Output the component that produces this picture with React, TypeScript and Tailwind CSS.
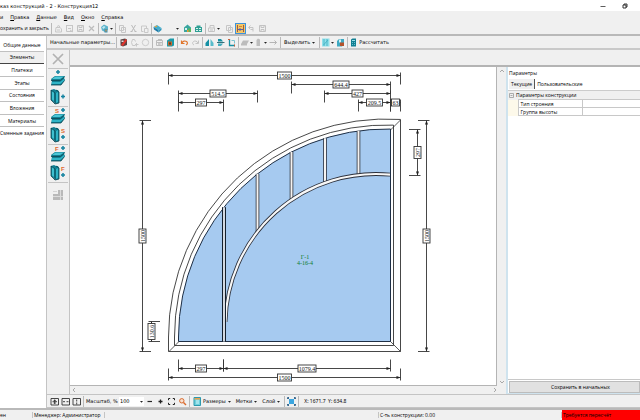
import React, { useState } from 'react';

interface IconProps {
  className?: string;
}

const INK = '#333333';
const TEAL = '#1590a4';

const baseSvg = 'block w-[9px] h-[9px] shrink-0';

/* ---------- icons ---------- */

type Shape =
  | 'doc' | 'save' | 'window' | 'cross' | 'copy' | 'cut' | 'paste' | 'print' | 'report' | 'layers'
  | 'house' | 'house2' | 'undo' | 'redo' | 'back' | 'dimension' | 'pencil' | 'globe' | 'orangeBox' | 'mirror'
  | 'align' | 'axes' | 'block' | 'column' | 'arrow' | 'grid' | 'corner' | 'calc' | 'fitAll' | 'fitW'
  | 'fitH' | 'minus' | 'plus' | 'full' | 'search' | 'ruler' | 'spread' | 'circle' | 'addDoc';

const shapes: Record<Shape, React.ReactNode> = {
  doc: <path d="M2 3.500h4l1.500 1.500v3H1.500zM3 2.500l2-1 1 2M3 6h3" fill="none" stroke="#c8c8c8" />,
  save: <path d="M1.500 1.500h6v6h-6zM3 1.500v2h3v-2M3 7.500v-2h3v2" fill="none" stroke="#c2c2c2" />,
  window: <path d="M1 1.500h7M1.500 1v6.500h6V1M3 4.500h3M5 6l3 2" fill="none" stroke="#c6c6c6" />,
  cross: <path d="M2 2l5 5M7 2L2 7" fill="none" stroke="#bcbcbc" strokeWidth="1.200" />,
  copy: <path d="M1.500 1.500h4v5h-4zM3.500 3.500h4v5h-4zM5 5.500h1.500" fill="none" stroke="#c6c6c6" />,
  cut: <path d="M2.500 1l3.500 6M6.500 1L3 7M1.500 7.500h2M5.500 7.500h2" fill="none" stroke="#bababa" />,
  paste: <path d="M1.500 2h5v3M1.500 2v5.500h2M4.500 4.500h3.500v4H4.500z" fill="none" stroke="#c8c8c8" />,
  print: <path d="M1.500 4h6v3.500h-6zM3 4V1.500h4V4M3 6h3" fill="none" stroke="#c4c4c4" />,
  report: (
    <>
      <path d="M1 3l3-2.500 4 2v3L5 8 2 6.500z" fill="#5db4cc" />
      <path d="M2 3.500L4 2l1.500 1-2 2z" fill="#c4e8f0" />
      <path d="M4.500 5h3v3.500h-3z" fill="#3b8fb0" />
      <path d="M5.500 5.500h1v2h-1z" fill="#f09a38" />
    </>
  ),
  layers: (
    <>
      <path d="M.5 3L4 1l4.500 3-3 2z" fill="#3fb0d0" />
      <path d="M.5 3l5 3v2.500L1 5.500z" fill="#1e7aa8" />
      <path d="M5.500 6l3-2v2l-3 2.500z" fill="#2c94ba" />
      <path d="M1.500 2.500L3.500 1.500l1 1-2 1z" fill="#e8a13a" />
    </>
  ),
  house: (
    <>
      <path d="M1 3.500L4.500.5 8 3.500V8H1z" fill="#3aa6a0" />
      <path d="M2 4h2v2H2z" fill="#d6f2ee" />
      <path d="M5 4.500h3V8H5z" fill="#58b85a" />
      <path d="M4 6h1.500v2H4z" fill="#e89b36" />
    </>
  ),
  house2: (
    <>
      <path d="M1 3h1.500V1.500h4V3H8v5H1z" fill="#2f9f94" />
      <path d="M2 4h2v1H2zM5 4h2v1H5zM2 6h2v1H2zM5 6h2v1H5z" fill="#d6f2ee" />
    </>
  ),
  undo: <path d="M1.500 2.500v3h3M2 5c1-2 3-2.500 4.500-1.500S7.500 6.500 6 7" fill="none" stroke="#e0752c" strokeWidth="1.200" />,
  redo: <path d="M7.500 2.500v3h-3M7 5c-1-2-3-2.500-4.500-1.500S1.500 6.500 3 7" fill="none" stroke="#c4c4c4" />,
  back: <path d="M3.500 1.500l-2 2 2 2M2 3.500h4v4M4 5.500h2" fill="none" stroke="#c4c4c4" />,
  dimension: (
    <>
      <path d="M0 0h9v9H0z" fill="#f6c666" />
      <path d="M1.500 1v7M7.500 1v7" stroke="#9a5b46" />
      <path d="M2 5.500h5M4 4v3" stroke="#5660a8" />
      <path d="M3 2.500h3" stroke="#d08a2c" />
    </>
  ),
  pencil: (
    <>
      <path d="M1.500 1.500L6 .5l2 1V7L4 8.500l-2.500-1z" fill="#5b4444" />
      <path d="M2 7l4.500-6L8 2.500 4 8z" fill="#e2342c" />
      <path d="M2.500 2.500h2v1.500h-2z" fill="#e9dede" />
    </>
  ),
  addDoc: <path d="M2.500 1.500l-1 3 1 3h3M2.500 1.500h2l1 2M6.500 5v3.500M5 6.500h3.500" fill="none" stroke="#c8c8c8" />,
  circle: <circle cx="4.500" cy="4.500" r="3.200" fill="none" stroke="#cdcdcd" />,
  globe: <path d="M1.500 2.500h6v5h-6zM1.500 4.500h6M3 1.500h4M4 4.500v3M3 6h3.500" fill="none" stroke="#bdbdbd" />,
  orangeBox: (
    <>
      <path d="M1 2.500L4 .5h4v7L6 8.500H1z" fill="#1b9aa9" />
      <path d="M2 3.500h4v4H2z" fill="#c9692b" />
      <path d="M3 4.500h2v2H3z" fill="#5c3a28" />
    </>
  ),
  mirror: (
    <>
      <path d="M4 1v7H.5V5z" fill={TEAL} />
      <path d="M5.500 1v7h3V5z" fill="#58bccb" />
    </>
  ),
  align: (
    <>
      <path d="M2 1h3l2 2.500H2z" fill={TEAL} />
      <path d="M1 4.500h7.500" stroke="#35707a" />
      <path d="M2 5.500h5l-2 2.500H2z" fill="#43adbf" />
    </>
  ),
  axes: (
    <>
      <path d="M2.500 1v6.500H8" fill="none" stroke={TEAL} strokeWidth="1.300" />
      <path d="M4.500 2.500h3v3" fill="none" stroke="#7cc4d0" />
      <path d="M1 1.500h2M7.500 6.500v2" fill="none" stroke="#c4603a" />
    </>
  ),
  block: <path d="M1 6l2-3.500h6L7 6zM1 6v1.500h6V6" fill="#bcbcbc" />,
  column: <path d="M2.500 2L4 .5l2 1V8H2.500z" fill="#bebebe" />,
  arrow: <path d="M.5 4.500h7M5.500 2.500l2 2-2 2" fill="none" stroke="#b5b5b5" />,
  grid: (
    <>
      <path d="M1 .5h7.500v8H1z" fill="#8fe0ea" />
      <path d="M3 1v7M6 1v7M2.500 7l4.500-5" stroke="#46b1c4" strokeWidth=".9" />
    </>
  ),
  corner: (
    <>
      <path d="M1 3l2-2h5v5L6 8.500H1z" fill="#3ea9c2" />
      <path d="M3 1.500h2v3H3z" fill="#d4f0f4" />
      <path d="M4 4.500h4v3.500H4z" fill="#b4532c" />
    </>
  ),
  calc: (
    <>
      <path d="M2 1.500L3.500.5H7v8H2z" fill="#127f92" />
      <path d="M3 2h3v1H3z" fill="#9be0e8" />
      <path d="M3 4h1v1H3zM5 4h1v1H5zM3 6h1v1H3zM5 6h1v1H5z" fill="#67c0cc" />
    </>
  ),
  fitAll: <path d="M1 1.500h7.500v6.500H1zM4.700 2.500v4.500M2.500 4.700h4.500M3.700 3.500h2M3.700 6h2" fill="none" stroke={INK} strokeWidth=".9" />,
  fitW: <path d="M1 1.500h7.500v6.500H1zM2 4.700h2M5.500 4.700h2" fill="none" stroke={INK} strokeWidth=".9" />,
  fitH: <path d="M1 1.500h7.500v6.500H1zM4.700 2.500v2M4.700 5.500v2" fill="none" stroke={INK} strokeWidth=".9" />,
  minus: <path d="M2.500 4.500h4.500" stroke="#222" strokeWidth="1.200" />,
  plus: <path d="M2.500 4.500h4M4.500 2.500v4" stroke="#222" strokeWidth="1.300" />,
  full: <path d="M1.500 3.200V1.500h1.700M5.800 1.500h1.700v1.700M7.500 5.800v1.700H5.800M3.200 7.500H1.500V5.800" fill="none" stroke="#222" />,
  search: (
    <>
      <circle cx="3.800" cy="3.800" r="2.200" fill="#f7e1d2" stroke="#d9692b" />
      <path d="M5.500 5.500l2.500 2.500" stroke="#d9692b" strokeWidth="1.400" />
    </>
  ),
  ruler: (
    <>
      <path d="M1 .5h6.500V8.500H1z" fill="#6fd0dc" stroke="#2c99ad" />
      <path d="M1.500 1h5.500v1.500H1.500z" fill="#eea04a" />
      <path d="M3 4h3M3 6h3" stroke="#d6f6fa" />
    </>
  ),
  spread: (
    <>
      <path d="M.5 2V.5H2M7 .5h1.500V2M8.500 7v1.500H7M2 8.500H.5V7M1 1l7 7M8 1L1 8" fill="none" stroke="#3a6a90" />
      <path d="M2 2h5v5H2z" fill="#3ba6e0" />
    </>
  ),
};

const Icon: React.FC<IconProps & { name: Shape }> = ({ name, className = baseSvg }) => (
  <svg viewBox="0 0 9 9" className={className} aria-hidden="true">
    {shapes[name]}
  </svg>
);

const Caret = () => (
  <svg viewBox="0 0 5 5" className="block w-[5px] h-[5px] shrink-0" aria-hidden="true">
    <path d="M1 2h3L2.500 3.700z" fill="#222" />
  </svg>
);

type ProfileKind = 'flat' | 'tall';

const ProfileIcon: React.FC<{ kind: ProfileKind; mark?: 'S' | 'F' }> = ({ kind, mark }) => (
  <svg viewBox="0 0 18 17" className="block w-[18px] h-[17px]" aria-hidden="true">
    {kind === 'flat' ? (
      <>
        <path d="M2 9l4-3h10l-1 2 1 2-4 5H2l1-3z" fill="#127f92" />
        <path d="M3 9l3.500-2.500H15L11 9z" fill="#4cc6d6" />
        <path d="M2.500 12L11 12l4-3v2l-4 3H3z" fill="#2fb4c6" />
        <path d="M2 10.500h9.500L15.500 7M2 15h10l3.500-4.500" fill="none" stroke="#0c4653" strokeWidth=".8" />
        <path d={mark ? 'M14 0v4M12 2h4' : 'M9 0v4M7 2h4'} stroke="#1583a0" strokeWidth="1.500" />
        {mark && <text x="6" y="4.500" fontSize="6" fontWeight="700" fill="#e0672c" fontFamily="Liberation Sans, sans-serif">{mark}</text>}
      </>
    ) : (
      <>
        <path d="M2 2l3-1 2 1h2l1 2v11l-3 1-5-4z" fill="#127f92" />
        <path d="M3 3l2 1v9l-2-1.500z" fill="#3fc0d0" />
        <path d="M7 5l2-1v10l-2 1z" fill="#2fb4c6" />
        <path d="M2 2l4 3v11M2 2v10l4 4 4-1V4L7 2" fill="none" stroke="#0c4653" strokeWidth=".8" />
        <path d={mark ? 'M14 9v4M12 11h4' : 'M14 6.500v4M12 8.500h4'} stroke="#1583a0" strokeWidth="1.500" />
        {mark && <text x="12" y="7" fontSize="6" fontWeight="700" fill="#e0672c" fontFamily="Liberation Sans, sans-serif">{mark}</text>}
      </>
    )}
  </svg>
);

/* ---------- toolbar parts ---------- */

const Sep = () => <span className="w-px h-[11px] mx-px bg-[#b9b9b9] shrink-0" />;

const IconButton: React.FC<{ name: Shape; label: string; active?: boolean }> = ({ name, label, active }) => (
  <button
    aria-label={label}
    className={active
      ? 'w-[11px] h-[11px] flex items-center justify-center shrink-0 border border-[#3c93dc] bg-[#f6c666]'
      : 'w-[11px] h-[11px] flex items-center justify-center shrink-0'}
  >
    <Icon name={name} />
  </button>
);

const SplitButton: React.FC<{ name: Shape; label: string }> = ({ name, label }) => (
  <button aria-label={label} className="h-[11px] flex items-center shrink-0">
    <Icon name={name} />
    <Caret />
  </button>
);

const TextMenuButton: React.FC<{ text: string; icon?: Shape }> = ({ text, icon }) => (
  <button className="h-[11px] flex items-center gap-px px-0.5 shrink-0">
    {icon && <Icon name={icon} />}
    <span>{text}</span>
    <Caret />
  </button>
);

/* ---------- drawing ---------- */

interface DimProps {
  from: number;
  to: number;
  at: number;
  label: string;
  size: number;
  arrows?: boolean;
  ticks?: 'down' | 'up';
}

const labelFont = '"Liberation Serif", serif';

const HDim: React.FC<DimProps> = ({ from, to, at, label, size, arrows = true, ticks = 'down' }) => {
  const mid = (from + to) / 2;
  const top = ticks === 'down' ? at - 3 : at - 9;
  return (
    <g>
      <path d={`M${from} ${at}H${to}M${from} ${top}v12M${to} ${top}v12`} stroke={INK} fill="none" strokeWidth=".9" />
      {arrows && <path d={`M${from} ${at}l4-1.500v3zM${to} ${at}l-4-1.500v3z`} fill="#222" />}
      <rect x={mid - size / 2} y={at - 3.5} width={size} height="7" fill="#fff" stroke={INK} strokeWidth=".9" />
      <text x={mid} y={at + 2.2} fontSize="6" textAnchor="middle" fontFamily={labelFont} fill="#111">{label}</text>
    </g>
  );
};

const VDim: React.FC<DimProps & { side: 'left' | 'right' }> = ({ from, to, at, label, size, side }) => {
  const mid = (from + to) / 2;
  const start = side === 'left' ? at - 3 : at - 8.5;
  return (
    <g>
      <path d={`M${at} ${from}V${to}M${start} ${from}h11.500M${start} ${to}h11.500`} stroke={INK} fill="none" strokeWidth=".9" />
      <path d={`M${at} ${from}l-1.500 4h3zM${at} ${to}l-1.500-4h3z`} fill="#222" />
      <rect x={at - 3.5} y={mid - size / 2} width="7" height={size} fill="#fff" stroke={INK} strokeWidth=".9" />
      <text transform={`translate(${at + 2.2} ${mid}) rotate(-90)`} fontSize="6" textAnchor="middle" fontFamily={labelFont} fill="#111">{label}</text>
    </g>
  );
};

// outer frame arcs share one centre, the inner impost arc has its own
const CX = 386.5;
const CY = 337;
const frameY = (r: number, x: number) => CY - Math.sqrt(r * r - (CX - x) * (CX - x));

const IR = 150.5;
const innerY = (x: number) => 324.5 - Math.sqrt(IR * IR - (376 - x) * (376 - x));

const framePath = (r: number, bottom: number, right: number) =>
  `M${CX - r} ${bottom}V${CY}A${r} ${r} 0 0 1 ${right} ${frameY(r, right)}V${bottom}Z`;

const innerArc = `M225.500 322A${IR} ${IR} 0 0 1 390.500 ${innerY(390.5)}`;

const mullions = [257.5, 291.5, 325, 358.5];

const Drawing = () => (
  <svg viewBox="70 67 426 319" className="block w-[426px] h-[319px] shrink-0" role="img" aria-label="Конструкция12">
    <path d={framePath(218, 351.5, 400.5)} fill="#fff" stroke={INK} strokeWidth=".9" />
    <path d={framePath(212, 345.5, 393.5)} fill="#fff" stroke={INK} strokeWidth=".9" />
    <path d={framePath(208, 341.5, 390.5)} fill="#a6caf0" stroke="#1f2f45" />
    <path d="M169 351.500l10-10M400.500 351.500l-10-10M400.500 120l-10 10" stroke={INK} strokeWidth=".8" />

    {mullions.map((x) => (
      <g key={x}>
        <path d={`M${x} ${frameY(208, x)}V${innerY(x)}`} stroke="#2b2f3a" strokeWidth="3.600" />
        <path d={`M${x} ${frameY(208, x)}V${innerY(x)}`} stroke="#f5f3f1" strokeWidth="2" />
      </g>
    ))}

    <path d={innerArc} fill="none" stroke="#2b2f3a" strokeWidth="3.800" />
    <path d={innerArc} fill="none" stroke="#f7f7f7" strokeWidth="2.200" />
    <path d={`M224 ${frameY(208, 224)}V341.500`} stroke="#14202e" strokeWidth="4" />
    <path d={`M224 ${frameY(208, 224)}V341.500`} stroke="#e8eef5" strokeWidth="1.800" />
    <path d="M390.500 129.500V341.500" stroke="#1f2f45" />

    <HDim from={168.5} to={400.5} at={75.5} label="1500" size={14} />
    <HDim from={291.5} to={390.5} at={84.5} label="644.4" size={16} />
    <HDim from={324.5} to={390.5} at={93.5} label="427" size={11} />
    <HDim from={178.5} to={257.5} at={93.5} label="514.5" size={16} />
    <HDim from={178.5} to={223.5} at={102.5} label="297" size={11} />
    <HDim from={358.5} to={390.5} at={102.5} label="209.5" size={16} />
    <HDim from={390.5} to={400.5} at={102.5} label="63" size={8} arrows={false} />

    <VDim from={120.5} to={351.5} at={142.5} label="1500" size={14} side="left" />
    <VDim from={321.5} to={341.5} at={151.5} label="130.6" size={16} side="left" />
    <VDim from={129.5} to={175.5} at={417.5} label="297" size={12} side="right" />
    <VDim from={120.5} to={351.5} at={426.5} label="1500" size={14} side="right" />

    <HDim from={178.5} to={223.5} at={368.5} label="297" size={11} ticks="up" />
    <HDim from={223.5} to={390.5} at={368.5} label="1079.4" size={18} ticks="up" />
    <HDim from={168.5} to={400.5} at={377.5} label="1500" size={14} ticks="up" />

    <g fontFamily={labelFont} fontSize="6" textAnchor="middle" fill="#0b7d2c">
      <text x="305" y="259">Г-1</text>
      <text x="305" y="265">4-16-4</text>
    </g>
  </svg>
);

/* ---------- page ---------- */

const menu = ['Правка', 'Данные', 'Вид', 'Окно', 'Справка'];
const sections = ['Общие данные', 'Элементы', 'Платежи', 'Этапы', 'Состояния', 'Вложения', 'Материалы', 'Сменные задания'];
const params = ['Тип строения', 'Группа высоты'];

const ToolColumn = () => (
  <div className="w-[23px] shrink-0 flex flex-col items-center border-r border-[#c4c4c4]">
    <button aria-label="Удалить" className="w-5 h-[19px] flex items-center justify-center border-b border-[#c4c4c4]">
      <svg viewBox="0 0 12 12" className="block w-3 h-3" aria-hidden="true">
        <path d="M1 1l10 10M11 1L1 11" stroke="#b2b2b2" strokeWidth="1.700" />
      </svg>
    </button>
    {([undefined, 'S', 'F'] as const).map((mark) => (
      <div key={mark ?? 'base'} className="w-5 h-[38px] flex flex-col items-center justify-evenly border-b border-[#c4c4c4]">
        <button aria-label={`Горизонтальный профиль ${mark ?? ''}`}>
          <ProfileIcon kind="flat" mark={mark} />
        </button>
        <button aria-label={`Вертикальный профиль ${mark ?? ''}`}>
          <ProfileIcon kind="tall" mark={mark} />
        </button>
      </div>
    ))}
    <button aria-label="Раскладка" className="w-5 h-6 flex items-center justify-center">
      <svg viewBox="0 0 12 12" className="block w-3 h-3" aria-hidden="true">
        <path d="M1 5h5V1h5v10H1z" fill="#b9b9b9" />
        <path d="M1 7.500h10M8.500 1v10" stroke="#dcdcdc" />
        <path d="M1 2.500h4" stroke="#d4d4d4" />
      </svg>
    </button>
  </div>
);

const ParamsPanel = () => {
  const [tab, setTab] = useState(0);
  return (
    <aside className="flex-1 min-w-0 flex flex-col bg-white border-l-2 border-b border-[#cfe3ee]">
      <h2 className="h-[11px] px-px flex items-center">Параметры</h2>
      <div className="h-3 px-px flex items-center" role="tablist">
        {['Текущие', 'Пользовательские'].map((name, i) => (
          <button
            key={name}
            role="tab"
            aria-selected={tab === i}
            onClick={() => setTab(i)}
            className={tab === i ? 'h-[10px] px-0.5 bg-[#f0f0f0] border-r border-[#555555]' : 'h-[10px] px-0.5'}
          >
            {name}
          </button>
        ))}
      </div>
      <table className="w-full table-fixed border-collapse">
        <colgroup>
          <col className="w-[10px]" />
          <col className="w-16" />
          <col />
        </colgroup>
        <tbody>
          <tr className="h-[9px] bg-[#f0f0f0]">
            <td colSpan={3} className="border-t border-[#cccccc] p-0">
              <button className="flex items-center gap-0.5 pl-px h-[7px]">
                <svg viewBox="0 0 5 5" className="block w-[5px] h-[5px]" aria-hidden="true">
                  <path d="M.5.5h4v4h-4zM1.500 2.500h2" fill="none" stroke="#999" strokeWidth=".8" />
                </svg>
                Параметры конструкции
              </button>
            </td>
          </tr>
          {params.map((name) => (
            <tr key={name} className="h-2">
              <td className="bg-[#fdf9ea] p-0" />
              <th scope="row" className="border border-[#c8c8c8] font-normal text-left px-0.5 py-0">{name}</th>
              <td className="border-y border-[#c8c8c8] p-0" />
            </tr>
          ))}
        </tbody>
      </table>
      <div className="mt-auto border-t border-[#c8c8c8] pt-px pl-px">
        <button className="w-full h-3 bg-[#e1e1e1] border border-[#bcbcbc] pl-3">Сохранить в начальных</button>
      </div>
    </aside>
  );
};

const ScrollMark: React.FC<{ d: string }> = ({ d }) => (
  <svg viewBox="0 0 6 6" className="block w-[6px] h-[6px]" aria-hidden="true">
    <path d={d} fill="none" stroke="#a8a8a8" />
  </svg>
);

const CanvasArea = () => (
  <div className="flex flex-col shrink-0">
    <div className="flex flex-1 min-h-0">
      <div className="bg-white border-b border-r border-[#b4b4b4] overflow-hidden">
        <Drawing />
      </div>
      <div className="w-[9px] flex flex-col justify-between items-center py-px">
        <ScrollMark d="M1 4l2-2 2 2" />
        <ScrollMark d="M1 2l2 2 2-2" />
      </div>
    </div>
    <div className="h-2 flex items-center justify-between pl-px pr-2">
      <ScrollMark d="M4 1L2 3l2 2" />
      <ScrollMark d="M2 1l2 2-2 2" />
    </div>
  </div>
);

const BottomBar = () => {
  const [zoom, setZoom] = useState('100');
  return (
    <div className="h-[14px] shrink-0 flex items-center pl-0.5 border-y border-[#c4c4c4] font-['DejaVu_Sans',sans-serif]">
      <IconButton name="fitAll" label="Вписать" />
      <IconButton name="fitW" label="По ширине" />
      <IconButton name="fitH" label="По высоте" />
      <Sep />
      <label htmlFor="zoom" className="pl-px w-[34px] shrink-0">Масштаб, %</label>
      <div className="flex items-center bg-white h-[9px]">
        <select
          id="zoom"
          value={zoom}
          onChange={(e) => setZoom(e.target.value)}
          className="appearance-none w-5 h-[9px] px-px leading-[9px] bg-white"
        >
          <option>50</option>
          <option>100</option>
          <option>200</option>
        </select>
        <Caret />
      </div>
      <IconButton name="minus" label="Уменьшить" />
      <IconButton name="plus" label="Увеличить" />
      <IconButton name="full" label="На весь экран" />
      <IconButton name="search" label="Лупа" />
      <Sep />
      <TextMenuButton text="Размеры" icon="ruler" />
      <TextMenuButton text="Метки" />
      <TextMenuButton text="Слой" />
      <Sep />
      <IconButton name="spread" label="Развернуть" />
      <Sep />
      <span className="pl-1 font-['Noto_Sans',sans-serif]">X: 1671.7&nbsp; Y: 634.8</span>
    </div>
  );
};

const App = () => {
  const [section, setSection] = useState('Элементы');

  return (
    <div className="h-screen w-full flex flex-col overflow-hidden bg-[#f0f0f0] text-black text-[5px] leading-[6px] whitespace-nowrap font-['Open_Sans',sans-serif]">
      <header className="h-[11px] shrink-0 bg-white flex items-center justify-between pr-3 font-['DejaVu_Sans',sans-serif]">
        <h1>каз конструкций - 2 - Конструкция12</h1>
        <div className="flex items-center gap-4">
          <button aria-label="Свернуть">
            <svg viewBox="0 0 6 6" className="block w-[6px] h-[6px]" aria-hidden="true">
              <path d="M.5 3.500h5" stroke="#333" strokeWidth=".8" />
            </svg>
          </button>
          <button aria-label="Восстановить">
            <svg viewBox="0 0 6 6" className="block w-[6px] h-[6px]" aria-hidden="true">
              <path d="M1 2h3v3H1zM2 2V1h3v3H4" fill="none" stroke="#222" strokeWidth=".9" />
            </svg>
          </button>
        </div>
      </header>

      <nav className="h-[11px] shrink-0 flex items-center gap-[7px] font-['DejaVu_Sans',sans-serif]">
        <button>и</button>
        {menu.map((item) => (
          <button key={item}>
            <u>{item[0]}</u>
            {item.slice(1)}
          </button>
        ))}
      </nav>

      <div className="h-[14px] shrink-0 flex items-center border-b-2 border-[#b9b9b9]">
        <button className="w-[50px] shrink-0 text-left">охранить и закрыть</button>
        <Sep />
        <IconButton name="doc" label="Открыть" />
        <IconButton name="window" label="Окно" />
        <IconButton name="save" label="Сохранить" />
        <IconButton name="cross" label="Закрыть" />
        <Sep />
        <SplitButton name="report" label="Отчёт" />
        <Sep />
        <IconButton name="copy" label="Копировать" />
        <IconButton name="cut" label="Вырезать" />
        <IconButton name="paste" label="Вставить" />
        <Sep />
        <button aria-label="Слои" className="w-[27px] flex items-center justify-between shrink-0">
          <Icon name="layers" />
          <Caret />
        </button>
        <div className="flex pl-0.5">
          <IconButton name="house" label="Изделие" />
          <IconButton name="house2" label="Каталог" />
        </div>
        <Sep />
        <SplitButton name="print" label="Печать" />
        <div className="flex items-center pl-[3px]">
          <IconButton name="copy" label="Дублировать" />
          <IconButton name="dimension" label="Размеры" active />
          <IconButton name="back" label="Вернуть" />
          <IconButton name="save" label="Запись" />
        </div>
      </div>

      <div className="flex-1 min-h-0 flex">
        <nav className="w-[46px] shrink-0 bg-white pt-[3px] pr-0.5">
          <div className="h-[100px] flex flex-col">
            {sections.map((name, i) => (
              <button
                key={name}
                onClick={() => setSection(name)}
                className={
                  name === section
                    ? 'flex-1 border-b border-[#444444] bg-[#f0f0f0]'
                    : i < sections.length - 1
                      ? 'flex-1 border-b border-[#c0c0c0]'
                      : 'flex-1'
                }
              >
                {name}
              </button>
            ))}
          </div>
        </nav>

        <div className="flex-1 min-w-0 flex flex-col border-l border-[#c4c4c4]">
          <div className="h-[14px] shrink-0 flex items-center border-b-2 border-[#c9c9c9] pl-[3px] font-['DejaVu_Sans',sans-serif]">
            <button className="w-[65px] shrink-0 text-left">Начальные параметры...</button>
            <Sep />
            <IconButton name="pencil" label="Изменить" />
            <IconButton name="addDoc" label="Добавить" />
            <IconButton name="circle" label="Контур" />
            <Sep />
            <IconButton name="globe" label="Свойства" />
            <IconButton name="orangeBox" label="Заполнение" />
            <Sep />
            <IconButton name="undo" label="Отменить" />
            <IconButton name="redo" label="Повторить" />
            <Sep />
            <IconButton name="mirror" label="Отразить" />
            <IconButton name="align" label="Выровнять" />
            <IconButton name="axes" label="Оси" />
            <Sep />
            <SplitButton name="block" label="Импост" />
            <SplitButton name="column" label="Стойка" />
            <IconButton name="arrow" label="Сдвинуть" />
            <Sep />
            <TextMenuButton text="Выделить" />
            <Sep />
            <div className="flex items-center">
              <SplitButton name="grid" label="Сетка" />
              <IconButton name="corner" label="Угол" />
            </div>
            <Sep />
            <button className="flex items-center gap-px">
              <Icon name="calc" />
              Рассчитать
            </button>
          </div>

          <div className="flex-1 min-h-0 flex">
            <ToolColumn />
            <div className="flex-1 min-w-0 flex flex-col">
              <div className="h-[17px] shrink-0 border-b-2 border-[#b4b4b4]" />
              <div className="flex-1 min-h-0 flex">
                <CanvasArea />
                <ParamsPanel />
              </div>
            </div>
          </div>

          <BottomBar />
        </div>
      </div>

      <footer className="h-3 shrink-0 flex items-center border-t-2 border-[#b9b9b9]">
        <span className="w-[33px] shrink-0 border-r border-[#c4c4c4]">ен</span>
        <span className="w-[72px] shrink-0 border-r border-[#c4c4c4] pl-px">Менеджер: Администратор</span>
        <span className="flex-1" />
        <span className="w-[184px] shrink-0 border-x border-[#c4c4c4] pl-px">С-ть конструкции: 0.00</span>
        <span className="w-[78px] shrink-0 self-stretch bg-[#ff0000] flex items-center pl-px">Требуется пересчёт</span>
      </footer>
    </div>
  );
};

export default App;
